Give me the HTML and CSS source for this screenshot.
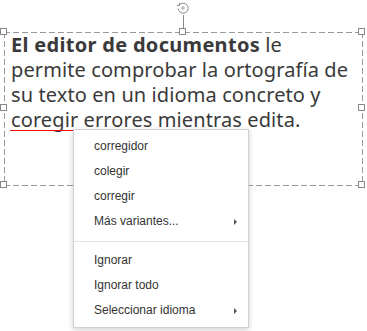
FILE: index.html
```html
<!DOCTYPE html>
<html lang="es">
<head>
    <meta charset="UTF-8">
    <title>Editor</title>
    <link rel="stylesheet" href="styles.css">
</head>
<body>

<div class="canvas">
    <div class="shape">
        <div class="rotate">
            <svg width="14" height="14" viewBox="0 0 14 14">
                <path d="M3.2 4.2 A5 5 0 1 1 2.2 7.5" fill="none" stroke="#888" stroke-width="1"/>
                <path d="M1 4.5 L3.4 4.3 L3.6 2" fill="none" stroke="#888" stroke-width="1"/>
                <circle cx="7" cy="7" r="1.2" fill="none" stroke="#888" stroke-width="0.8"/>
            </svg>
            <span class="rotate-line"></span>
        </div>
        <span class="handle tl"></span>
        <span class="handle tm"></span>
        <span class="handle tr"></span>
        <span class="handle ml"></span>
        <span class="handle mr"></span>
        <span class="handle bl"></span>
        <span class="handle bm"></span>
        <span class="handle br"></span>
        <p class="text"><b>El editor de documentos</b> le permite comprobar la ortografía de su texto en un idioma concreto y <span class="misspelled">coregir</span> errores mientras edita.</p>
    </div>

    <ul class="context-menu">
        <li>corregidor</li>
        <li>colegir</li>
        <li>corregir</li>
        <li class="submenu">Más variantes...</li>
        <li class="separator"></li>
        <li>Ignorar</li>
        <li>Ignorar todo</li>
        <li class="submenu">Seleccionar idioma</li>
    </ul>
</div>

</body>
</html>
```

FILE: styles.css
```css
body {
    margin: 0;
    background: #fff;
    font-family: "Noto Sans", sans-serif;
}
.canvas {
    position: relative;
    width: 367px;
    height: 331px;
    overflow: hidden;
}
.shape {
    position: relative;
    margin: 32px 0 0 4px;
    width: 359px;
    height: 154px;
    box-sizing: border-box;
    padding: 0 12px 0 7px;
    background:
        repeating-linear-gradient(90deg, #9a9a9a 0 6px, transparent 6px 9px) left top / 100% 1px no-repeat,
        repeating-linear-gradient(90deg, #9a9a9a 0 6px, transparent 6px 9px) left bottom / 100% 1px no-repeat,
        repeating-linear-gradient(180deg, #9a9a9a 0 6px, transparent 6px 9px) left top / 1px 100% no-repeat,
        repeating-linear-gradient(180deg, #9a9a9a 0 6px, transparent 6px 9px) right top / 1px 100% no-repeat;
}
.text {
    margin: 0;
    font-size: 20px;
    line-height: 25px;
    letter-spacing: 0.1px;
    color: #3a3a3a;
}
.text b {
    font-weight: bold;
    letter-spacing: 0.3px;
}
.misspelled {
    position: relative;
}
.misspelled::after {
    content: "";
    position: absolute;
    left: -1px;
    right: -2px;
    bottom: 2px;
    height: 0;
    border-top: 1px solid #ff0000;
}
.handle {
    position: absolute;
    width: 7px;
    height: 7px;
    border: 1px solid #888;
    background: #fff;
    box-sizing: border-box;
    margin: -4px 0 0 -4px;
}
.tl { left: 0; top: 0; }
.tm { left: 179px; top: 0; }
.tr { left: 358px; top: 0; }
.ml { left: 0; top: 76px; }
.mr { left: 358px; top: 76px; }
.bl { left: 0; top: 153px; }
.bm { left: 179px; top: 153px; }
.br { left: 358px; top: 153px; }
.rotate {
    position: absolute;
    left: 172px;
    top: -31px;
    width: 14px;
    display: flex;
    flex-direction: column;
    align-items: center;
}
.rotate svg {
    display: block;
}
.rotate-line {
    width: 1px;
    height: 15px;
    background: #888;
}
.context-menu {
    position: absolute;
    left: 73px;
    top: 129px;
    width: 176px;
    margin: 0;
    padding: 4px 0;
    list-style: none;
    background: #fff;
    border: 1px solid #d0d0d0;
    box-sizing: border-box;
    box-shadow: 0 2px 6px rgba(0, 0, 0, 0.18);
    font-family: "Liberation Sans", Arial, sans-serif;
    font-size: 12px;
    color: #333;
}
.context-menu li {
    height: 25px;
    line-height: 25px;
    padding-left: 20px;
    position: relative;
}
.context-menu .separator {
    height: 1px;
    padding: 0;
    margin: 7px 0 6px;
    background: #e3e3e3;
}
.context-menu .submenu::after {
    content: "";
    position: absolute;
    right: 11px;
    top: 10px;
    border-left: 3px solid #555;
    border-top: 3px solid transparent;
    border-bottom: 3px solid transparent;
}
```
